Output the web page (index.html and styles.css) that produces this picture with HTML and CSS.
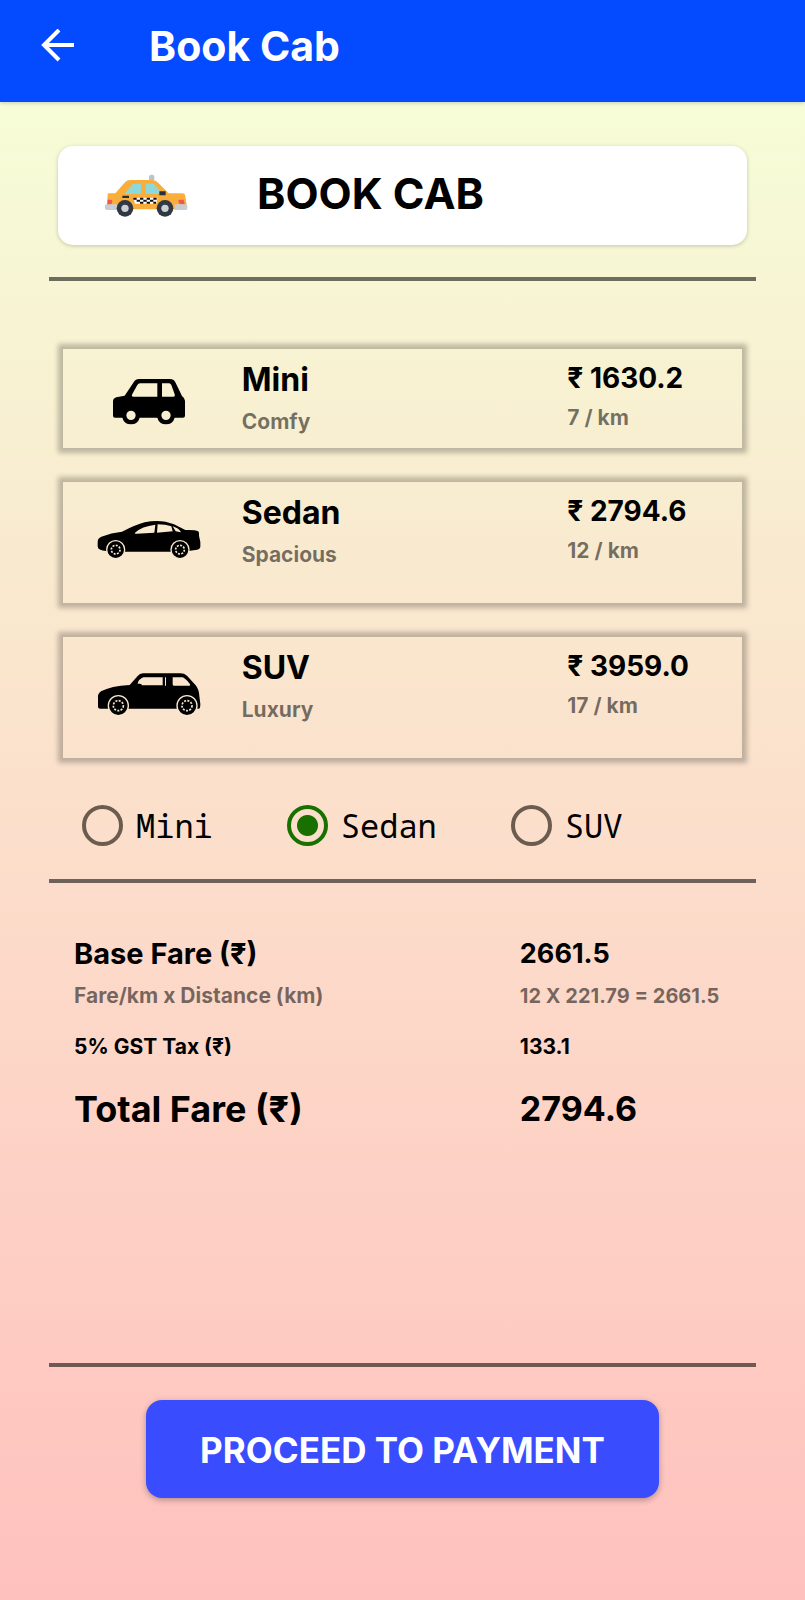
FILE: index.html
```html
<!DOCTYPE html>
<html lang="en">
<head>
<meta charset="utf-8">
<meta name="viewport" content="width=device-width, initial-scale=1">
<title>Book Cab</title>
<link rel="stylesheet" href="styles.css">
</head>
<body>
<header class="appbar">
  <button class="back" type="button" aria-label="Back">
    <svg width="34" height="34" viewBox="0 0 34 34" fill="none" stroke="currentColor" stroke-width="4"><path d="M34 16H4M19 1L4 16l15 15"/></svg>
  </button>
  <h1 class="appbar-title">Book Cab</h1>
</header>
<main class="page">
  <section class="banner">
    <svg class="taxi" width="110" height="70" viewBox="0 -8 330 210" aria-hidden="true">
      <path fill="#bcc3c9" d="M177 58V49q0-7 8-7t8 7v9z"/>
      <path fill="#f9ae3c" d="M55 98h21l29-33q6-7 15-7h66q10 0 16 6l34 34h41q8 0 9 8l4 28-10 12H56l-5-12 2-30q0-6 2-6z"/>
      <path fill="#8ed8dc" d="M106 97l20-25q3-3 7-3h20v31h-45zM167 69h18q6 0 10 4l19 22-9 5h-38z"/>
      <path fill="#26303b" d="M97 105h20v7H97zM208 92h19v12h-19z"/>
      <path fill="#fff" d="M130 111h73l-5 18h-63z"/>
      <path fill="#111" d="M130 111h10v6h-10zM150 111h10v6h-10zM170 111h10v6h-10zM190 111h10v6h-10zM140 117h10v6h-10zM160 117h10v6h-10zM180 117h10v6h-10zM150 123h10v6h-10zM170 123h10v6h-10zM190 123h8v6h-8z"/>
      <path fill="#f2574f" d="M53 117h10q4 0 4 6t-6 9h-9zM265 120q0-3 5-3h11l3 14h-13q-6-3-6-11z"/>
      <path fill="#c8cdd1" d="M48 131h33v17H50q-5 0-5-6v-6q0-5 3-5zM254 131h34q4 0 4 6v5q0 6-5 6h-33z"/>
      <g fill="#303844"><circle cx="105" cy="143" r="25"/><circle cx="225" cy="143" r="25"/></g>
      <g fill="#ccd0d3"><circle cx="105" cy="143" r="11"/><circle cx="225" cy="143" r="11"/></g>
    </svg>
    <h2 class="banner-title">BOOK CAB</h2>
  </section>
  <hr class="rule">

  <ul class="cabs">
    <li class="cab cab-short">
      <svg class="cab-icon" width="120" height="60" viewBox="0 48 360 180" aria-hidden="true">
        <path fill-rule="evenodd" d="M69 124q0-9 10-12l25-5 27-40q6-10 16-10h93q11 0 16 10l20 41q9 7 9 14v45q0 6-6 6h-25a27 27 0 0 1-52 0h-53a27 27 0 0 1-52 0H75q-6 0-6-6zM150 70q-5 0-8 5l-15 27q-4 8 3 8h72V70zM216 70v40h34q6 0 4-7l-10-28q-2-5-7-5zM109 166a14 14 0 1 0 28 0a14 14 0 1 0-28 0zM214 166a14 14 0 1 0 28 0a14 14 0 1 0-28 0z"/>
      </svg>
      <div class="cab-name"><h3>Mini</h3><p class="note">Comfy</p></div>
      <div class="cab-price"><strong>₹ 1630.2</strong><p class="note">7 / km</p></div>
    </li>
    <li class="cab">
      <svg class="cab-icon" width="120" height="60" viewBox="0 12 360 180" aria-hidden="true">
        <path fill-rule="evenodd" d="M23 110q0-10 11-15 30-12 62-15 42-21 68-28 47-11 88 6l34 17q30-1 38 4 4 2 3 13l4 19v15q-1 6-9 8l-22 3-30 3H100l-51-2q-26-1-26-14zM135 83q20-19 61-24l-3 24-52 3q-9 0-6-3zM203 58q24 0 41 6l4 15-47 4zM248 64q20 6 25 18l-16-3z"/>
        <g class="tyre"><circle cx="77" cy="134" r="27"/><circle cx="270" cy="134" r="27"/></g>
        <g class="hub"><circle cx="77" cy="134" r="13"/><circle cx="270" cy="134" r="13"/></g>
      </svg>
      <div class="cab-name"><h3>Sedan</h3><p class="note">Spacious</p></div>
      <div class="cab-price"><strong>₹ 2794.6</strong><p class="note">12 / km</p></div>
    </li>
    <li class="cab">
      <svg class="cab-icon" width="120" height="60" viewBox="0 24 360 180" aria-hidden="true">
        <path fill-rule="evenodd" d="M24 126q-2-12 9-20 30-16 86-19l24-27q6-8 16-8h112q12 0 20 7l26 29q10 12 11 32l3 24q0 14-4 14H31q-8 0-7-9zM143 83q2-13 17-19h58v24h-62q-1-5-6-5zM225 64h3v25h-3zM248 64h30q7 2 21 19 5 6-4 6h-44q-3 0-3-4z"/>
        <g class="tyre"><circle cx="85" cy="149" r="30"/><circle cx="291" cy="149" r="30"/></g>
        <g class="hub"><circle cx="85" cy="149" r="15"/><circle cx="291" cy="149" r="15"/></g>
      </svg>
      <div class="cab-name"><h3>SUV</h3><p class="note">Luxury</p></div>
      <div class="cab-price"><strong>₹ 3959.0</strong><p class="note">17 / km</p></div>
    </li>
  </ul>

  <div class="choices" role="radiogroup" aria-label="Cab type">
    <label class="choice"><input type="radio" name="cab" value="mini">Mini</label>
    <label class="choice"><input type="radio" name="cab" value="sedan" checked>Sedan</label>
    <label class="choice"><input type="radio" name="cab" value="suv">SUV</label>
  </div>
  <hr class="rule">

  <table class="fare">
    <tr class="base"><th scope="row">Base Fare (₹)</th><td>2661.5</td></tr>
    <tr class="detail"><th scope="row">Fare/km x Distance (km)</th><td>12 X 221.79 = 2661.5</td></tr>
    <tr class="tax"><th scope="row">5% GST Tax (₹)</th><td>133.1</td></tr>
    <tr class="total"><th scope="row">Total Fare (₹)</th><td>2794.6</td></tr>
  </table>

  <hr class="rule rule-end">
  <button class="pay" type="button">PROCEED TO PAYMENT</button>
</main>
</body>
</html>
```
FILE: styles.css
```css
* { box-sizing: border-box; }

body {
  margin: 0;
  min-height: 100vh;
  display: flex;
  flex-direction: column;
  font-family: Inter, "Noto Sans", sans-serif;
  font-weight: 700;
  color: #000;
}

h1, h2, h3, p, ul { margin: 0; padding: 0; }

.appbar {
  display: flex;
  align-items: center;
  gap: 75px;
  padding: 18px 40px 28px;
  background: #044aff;
  color: #fff;
  box-shadow: 0 1px 4px rgba(0, 0, 0, 0.2);
  z-index: 1;
}

.back {
  display: flex;
  padding: 0;
  border: 0;
  background: none;
  color: inherit;
}

.appbar-title { font-size: 41px; line-height: 56px; }

.page {
  flex: 1;
  display: flex;
  flex-direction: column;
  padding: 44px 49px 102px;
  background: linear-gradient(#f6fdd7, #f8efd1 22%, #fcdcca 53%, #ffc1be);
}

.banner {
  display: flex;
  align-items: center;
  gap: 57px;
  margin: 0 9px 32px;
  padding: 12px 32px 17px;
  border-radius: 15px;
  background: #fff;
  box-shadow: 0 1px 4px rgba(0, 0, 0, 0.2);
}

.banner-title { font-size: 43px; line-height: 70px; }

.rule {
  width: 100%;
  height: 4px;
  margin: 0;
  border: 0;
  background: rgba(0, 0, 0, 0.56);
}

.cabs {
  display: flex;
  flex-direction: column;
  gap: 34px;
  margin: 68px 14px 47px;
  list-style: none;
}

.cab {
  display: grid;
  grid-template-columns: 179fr 326fr 175fr;
  align-items: start;
  padding-bottom: 32px;
  box-shadow: 0 0 5px 5px rgba(0, 0, 0, 0.24);
}

.cab-short { padding-bottom: 10px; }

.cab-icon { margin: 27px 0 0 27px; }

.cab-name, .cab-price { display: flex; flex-direction: column; }
.cab-name { gap: 6px; padding-top: 11px; }
.cab-price { gap: 4px; padding-top: 9px; }

.cab h3 { font-size: 32px; line-height: 40px; }
.cab strong { font-size: 28px; font-weight: 700; line-height: 40px; }
.note { font-size: 21px; line-height: 32px; color: rgba(0, 0, 0, 0.54); }

.tyre { stroke: #f9e9cf; stroke-width: 4; }

.hub {
  fill: none;
  stroke: #f9e9cf;
  stroke-width: 5;
  stroke-dasharray: 6 4;
}

.choices {
  display: flex;
  gap: 74px;
  margin: 0 33px 33px;
}

.choice {
  display: flex;
  align-items: center;
  gap: 13px;
  font: 400 32px/41px "Noto Sans Mono", "DejaVu Sans Mono", monospace;
}

.choice input {
  appearance: none;
  width: 41px;
  height: 41px;
  margin: 0;
  border: 4px solid #6c5c4f;
  border-radius: 50%;
}

.choice input:checked {
  border-color: #177000;
  background: radial-gradient(circle, #177000 10px, transparent 11px);
}

.fare {
  width: 100%;
  margin-top: 51px;
  border-collapse: collapse;
  table-layout: fixed;
}

.fare th, .fare td { padding: 0; text-align: left; vertical-align: top; }
.fare th { width: 66.6%; padding-left: 25px; }

.base { font-size: 29px; line-height: 40px; }
.base td { font-size: 27px; }
.fare .base > * { padding-bottom: 6px; }
.detail { font-size: 21px; line-height: 32px; color: rgba(0, 0, 0, 0.54); }
.detail td { font-size: 20px; }
.fare .detail > * { padding-bottom: 19px; }
.tax { font-size: 21px; line-height: 32px; }
.fare .tax > * { padding-bottom: 22px; }
.total { font-size: 36px; line-height: 48px; }
.total td { font-size: 34px; }

.rule-end { margin-top: auto; margin-bottom: 33px; }

.pay {
  align-self: center;
  padding: 26px 54px 24px;
  border: 0;
  border-radius: 16px;
  background: #394dff;
  color: #fff;
  font: 700 35px/48px Inter, "Noto Sans", sans-serif;
  box-shadow: 0 2px 6px rgba(0, 0, 0, 0.3);
}
```
